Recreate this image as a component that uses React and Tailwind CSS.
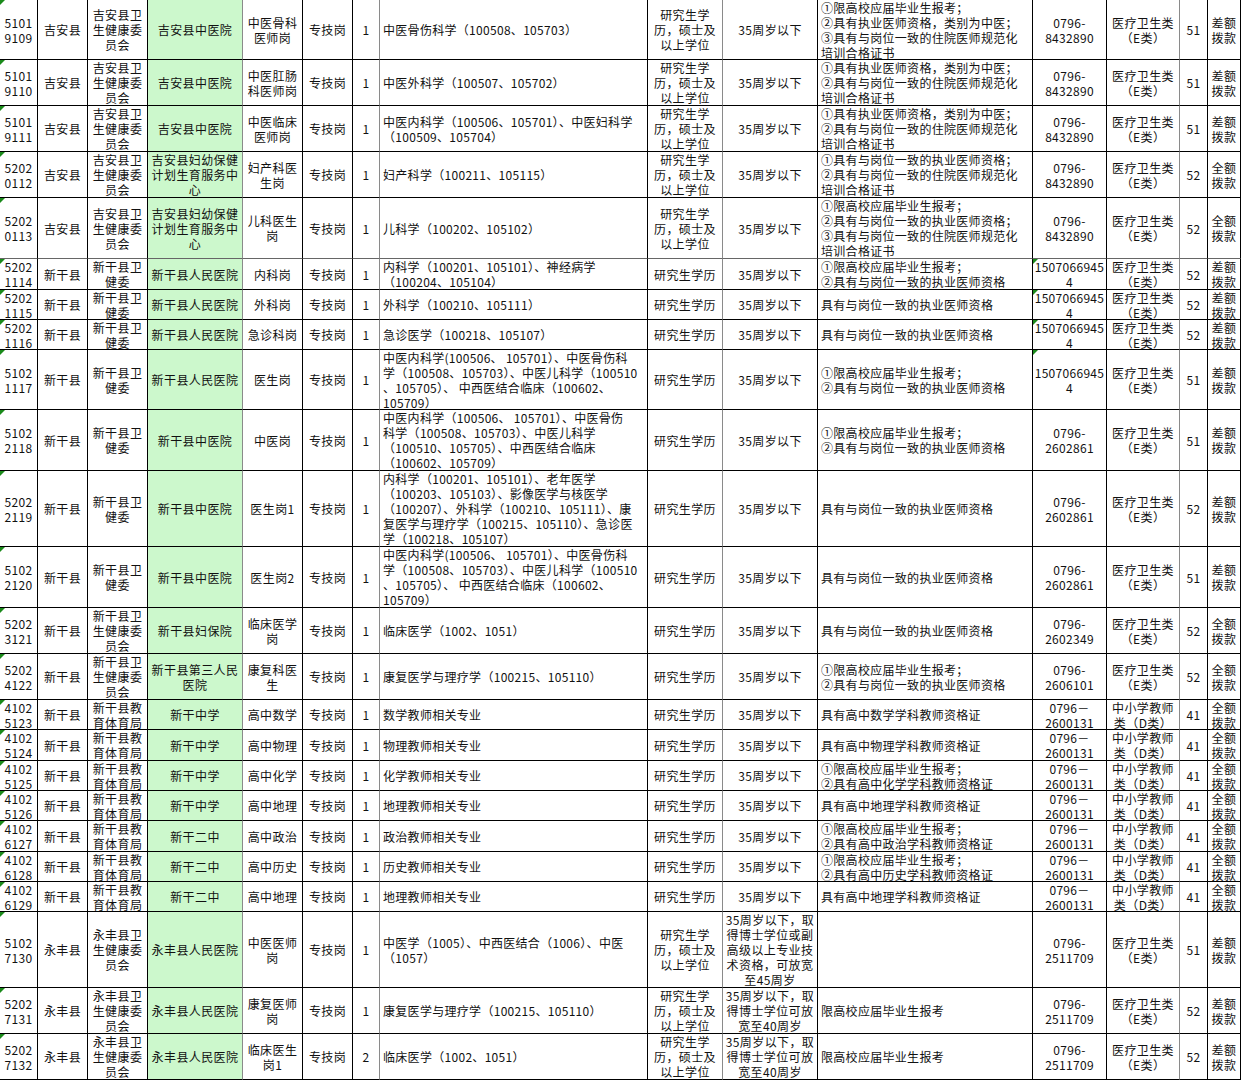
import React from "react";

const COLS =
  "grid grid-cols-[38px_50px_60px_95px_60px_50px_27px_268px_75px_95px_215px_74px_73px_28px_33px]";

const RB = [
  "border-r-black",
  "border-r-black",
  "border-r-black",
  "border-r-[#8a8a8a]",
  "border-r-black",
  "border-r-black",
  "border-r-[#8a8a8a]",
  "border-r-black",
  "border-r-[#8a8a8a]",
  "border-r-black",
  "border-r-black",
  "border-r-black",
  "border-r-[#8a8a8a]",
  "border-r-black",
  "border-r-black",
];

const LEFT = { 7: true, 10: true };

const JA = "吉安县卫\n生健康委\n员会";
const XG = "新干县卫\n健委";
const XGW = "新干县卫\n生健康委\n员会";
const XJ = "新干县教\n育体育局";
const YF = "永丰县卫\n生健康委\n员会";
const EDU3 = "研究生学\n历，硕士及\n以上学位";
const YJS = "研究生学历";
const AGE = "35周岁以下";
const ECAT = "医疗卫生类\n（E类）";
const DCAT = "中小学教师\n类（D类）";
const CE = "差额\n拨款";
const QE = "全额\n拨款";
const JA_PH = "0796-\n8432890";
const XG_PH = "1507066945\n4";
const ZY_PH = "0796-\n2602861";
const JY_PH = "0796－\n2600131";
const YF_PH = "0796-\n2511709";
const ZXJ = "专技岗";
const BOTH2 = "①限高校应届毕业生报考；\n②具有与岗位一致的执业医师资格";
const ZYYS = "具有与岗位一致的执业医师资格";
const MAJ9 =
  "中医内科学(100506、 105701）、中医骨伤科\n学（100508、105703）、中医儿科学（100510\n、105705）、 中西医结合临床（100602、\n105709）";

const rows = [
  {
    h: "h-[60px]",
    c: ["5101\n9109", "吉安县", JA, "吉安县中医院", "中医骨科\n医师岗", ZXJ, "1", "中医骨伤科学（100508、105703）", EDU3, AGE,
      "①限高校应届毕业生报考；\n②具有执业医师资格，类别为中医；\n③具有与岗位一致的住院医师规范化\n培训合格证书", JA_PH, ECAT, "51", CE],
  },
  {
    h: "h-[46px]",
    c: ["5101\n9110", "吉安县", JA, "吉安县中医院", "中医肛肠\n科医师岗", ZXJ, "1", "中医外科学（100507、105702）", EDU3, AGE,
      "①具有执业医师资格，类别为中医；\n②具有与岗位一致的住院医师规范化\n培训合格证书", JA_PH, ECAT, "51", CE],
  },
  {
    h: "h-[46px]",
    c: ["5101\n9111", "吉安县", JA, "吉安县中医院", "中医临床\n医师岗", ZXJ, "1", "中医内科学（100506、105701）、中医妇科学\n（100509、105704）", EDU3, AGE,
      "①具有执业医师资格，类别为中医；\n②具有与岗位一致的住院医师规范化\n培训合格证书", JA_PH, ECAT, "51", CE],
  },
  {
    h: "h-[46px]",
    c: ["5202\n0112", "吉安县", JA, "吉安县妇幼保健\n计划生育服务中\n心", "妇产科医\n生岗", ZXJ, "1", "妇产科学（100211、105115）", EDU3, AGE,
      "①具有与岗位一致的执业医师资格；\n②具有与岗位一致的住院医师规范化\n培训合格证书", JA_PH, ECAT, "52", QE],
  },
  {
    h: "h-[61px]",
    dashed: true,
    c: ["5202\n0113", "吉安县", JA, "吉安县妇幼保健\n计划生育服务中\n心", "儿科医生\n岗", ZXJ, "1", "儿科学（100202、105102）", EDU3, AGE,
      "①限高校应届毕业生报考；\n②具有与岗位一致的执业医师资格；\n③具有与岗位一致的住院医师规范化\n培训合格证书", JA_PH, ECAT, "52", QE],
  },
  {
    h: "h-[31px]",
    ph: true,
    c: ["5202\n1114", "新干县", XG, "新干县人民医院", "内科岗", ZXJ, "1", "内科学（100201、105101）、神经病学\n（100204、105104）", YJS, AGE,
      BOTH2, XG_PH, ECAT, "52", CE],
  },
  {
    h: "h-[30px]",
    ph: true,
    c: ["5202\n1115", "新干县", XG, "新干县人民医院", "外科岗", ZXJ, "1", "外科学（100210、105111）", YJS, AGE,
      ZYYS, XG_PH, ECAT, "52", CE],
  },
  {
    h: "h-[30px]",
    ph: true,
    c: ["5202\n1116", "新干县", XG, "新干县人民医院", "急诊科岗", ZXJ, "1", "急诊医学（100218、105107）", YJS, AGE,
      ZYYS, XG_PH, ECAT, "52", CE],
  },
  {
    h: "h-[60px]",
    ph: true,
    c: ["5102\n1117", "新干县", XG, "新干县人民医院", "医生岗", ZXJ, "1", MAJ9, YJS, AGE,
      BOTH2, XG_PH, ECAT, "51", CE],
  },
  {
    h: "h-[61px]",
    c: ["5102\n2118", "新干县", XG, "新干县中医院", "中医岗", ZXJ, "1",
      "中医内科学（100506、 105701）、中医骨伤\n科学（100508、105703）、中医儿科学\n（100510、105705）、中西医结合临床\n（100602、105709）", YJS, AGE,
      BOTH2, ZY_PH, ECAT, "51", CE],
  },
  {
    h: "h-[76px]",
    c: ["5202\n2119", "新干县", XG, "新干县中医院", "医生岗1", ZXJ, "1",
      "内科学（100201、105101）、老年医学\n（100203、105103）、影像医学与核医学\n（100207）、外科学（100210、105111）、康\n复医学与理疗学（100215、105110）、急诊医\n学（100218、105107）", YJS, AGE,
      ZYYS, ZY_PH, ECAT, "52", CE],
  },
  {
    h: "h-[61px]",
    c: ["5102\n2120", "新干县", XG, "新干县中医院", "医生岗2", ZXJ, "1", MAJ9, YJS, AGE,
      ZYYS, ZY_PH, ECAT, "51", CE],
  },
  {
    h: "h-[46px]",
    c: ["5202\n3121", "新干县", XGW, "新干县妇保院", "临床医学\n岗", ZXJ, "1", "临床医学（1002、1051）", YJS, AGE,
      ZYYS, "0796-\n2602349", ECAT, "52", QE],
  },
  {
    h: "h-[46px]",
    c: ["5202\n4122", "新干县", XGW, "新干县第三人民\n医院", "康复科医\n生", ZXJ, "1", "康复医学与理疗学（100215、105110）", YJS, AGE,
      BOTH2, "0796-\n2606101", ECAT, "52", QE],
  },
  {
    h: "h-[30px]",
    c: ["4102\n5123", "新干县", XJ, "新干中学", "高中数学", ZXJ, "1", "数学教师相关专业", YJS, AGE,
      "具有高中数学学科教师资格证", JY_PH, DCAT, "41", QE],
  },
  {
    h: "h-[31px]",
    c: ["4102\n5124", "新干县", XJ, "新干中学", "高中物理", ZXJ, "1", "物理教师相关专业", YJS, AGE,
      "具有高中物理学科教师资格证", JY_PH, DCAT, "41", QE],
  },
  {
    h: "h-[30px]",
    c: ["4102\n5125", "新干县", XJ, "新干中学", "高中化学", ZXJ, "1", "化学教师相关专业", YJS, AGE,
      "①限高校应届毕业生报考；\n②具有高中化学学科教师资格证", JY_PH, DCAT, "41", QE],
  },
  {
    h: "h-[30px]",
    c: ["4102\n5126", "新干县", XJ, "新干中学", "高中地理", ZXJ, "1", "地理教师相关专业", YJS, AGE,
      "具有高中地理学科教师资格证", JY_PH, DCAT, "41", QE],
  },
  {
    h: "h-[31px]",
    c: ["4102\n6127", "新干县", XJ, "新干二中", "高中政治", ZXJ, "1", "政治教师相关专业", YJS, AGE,
      "①限高校应届毕业生报考；\n②具有高中政治学科教师资格证", JY_PH, DCAT, "41", QE],
  },
  {
    h: "h-[30px]",
    c: ["4102\n6128", "新干县", XJ, "新干二中", "高中历史", ZXJ, "1", "历史教师相关专业", YJS, AGE,
      "①限高校应届毕业生报考；\n②具有高中历史学科教师资格证", JY_PH, DCAT, "41", QE],
  },
  {
    h: "h-[30px]",
    c: ["4102\n6129", "新干县", XJ, "新干二中", "高中地理", ZXJ, "1", "地理教师相关专业", YJS, AGE,
      "具有高中地理学科教师资格证", JY_PH, DCAT, "41", QE],
  },
  {
    h: "h-[76px]",
    c: ["5102\n7130", "永丰县", YF, "永丰县人民医院", "中医医师\n岗", ZXJ, "1", "中医学（1005）、中西医结合（1006）、中医\n（1057）", EDU3,
      "35周岁以下，取\n得博士学位或副\n高级以上专业技\n术资格，可放宽\n至45周岁",
      "", YF_PH, ECAT, "51", CE],
  },
  {
    h: "h-[46px]",
    c: ["5202\n7131", "永丰县", YF, "永丰县人民医院", "康复医师\n岗", ZXJ, "1", "康复医学与理疗学（100215、105110）", EDU3,
      "35周岁以下，取\n得博士学位可放\n宽至40周岁", "限高校应届毕业生报考", YF_PH, ECAT, "52", CE],
  },
  {
    h: "h-[46px]",
    c: ["5202\n7132", "永丰县", YF, "永丰县人民医院", "临床医生\n岗1", ZXJ, "2", "临床医学（1002、1051）", EDU3,
      "35周岁以下，取\n得博士学位可放\n宽至40周岁", "限高校应届毕业生报考", YF_PH, ECAT, "52", CE],
  },
];

function Tri() {
  return (
    <span className="absolute left-0 top-0 h-0 w-0 border-t-[5px] border-r-[5px] border-t-[#1a8a1a] border-r-transparent" />
  );
}

function Cell({ text, i, dashed, ph }) {
  const left = LEFT[i];
  const bg = i === 3 ? "bg-[#ccf8cc]" : "bg-white";
  const bottom = dashed ? "border-b-dashed border-b-[#666]" : "border-b-black";
  const track = i === 7 || i === 10 || i === 11 ? "tracking-[0.3px]" : "tracking-[0.4px]";
  return (
    <div
      className={`relative flex items-center overflow-hidden border-r border-b ${RB[i]} ${bottom} ${bg} ${
        left ? "justify-start pl-[3px] pr-[1px] text-left" : "justify-center px-[1px] text-center"
      }`}
    >
      {(i === 0 || (i === 11 && ph)) && <Tri />}
      <span className={`whitespace-pre leading-[15px] ${track}`}>{text}</span>
    </div>
  );
}

export default function App() {
  return (
    <div
      className="w-[1241px] h-[1080px] overflow-hidden bg-white text-[12px] text-[#111]"
      style={{ fontFamily: '"Noto Sans CJK SC", "Noto Sans", sans-serif' }}
    >
      {rows.map((r, ri) => (
        <div key={ri} className={`${COLS} ${r.h}`}>
          {r.c.map((t, i) => (
            <Cell key={i} text={t} i={i} dashed={r.dashed} ph={r.ph} />
          ))}
        </div>
      ))}
    </div>
  );
}
